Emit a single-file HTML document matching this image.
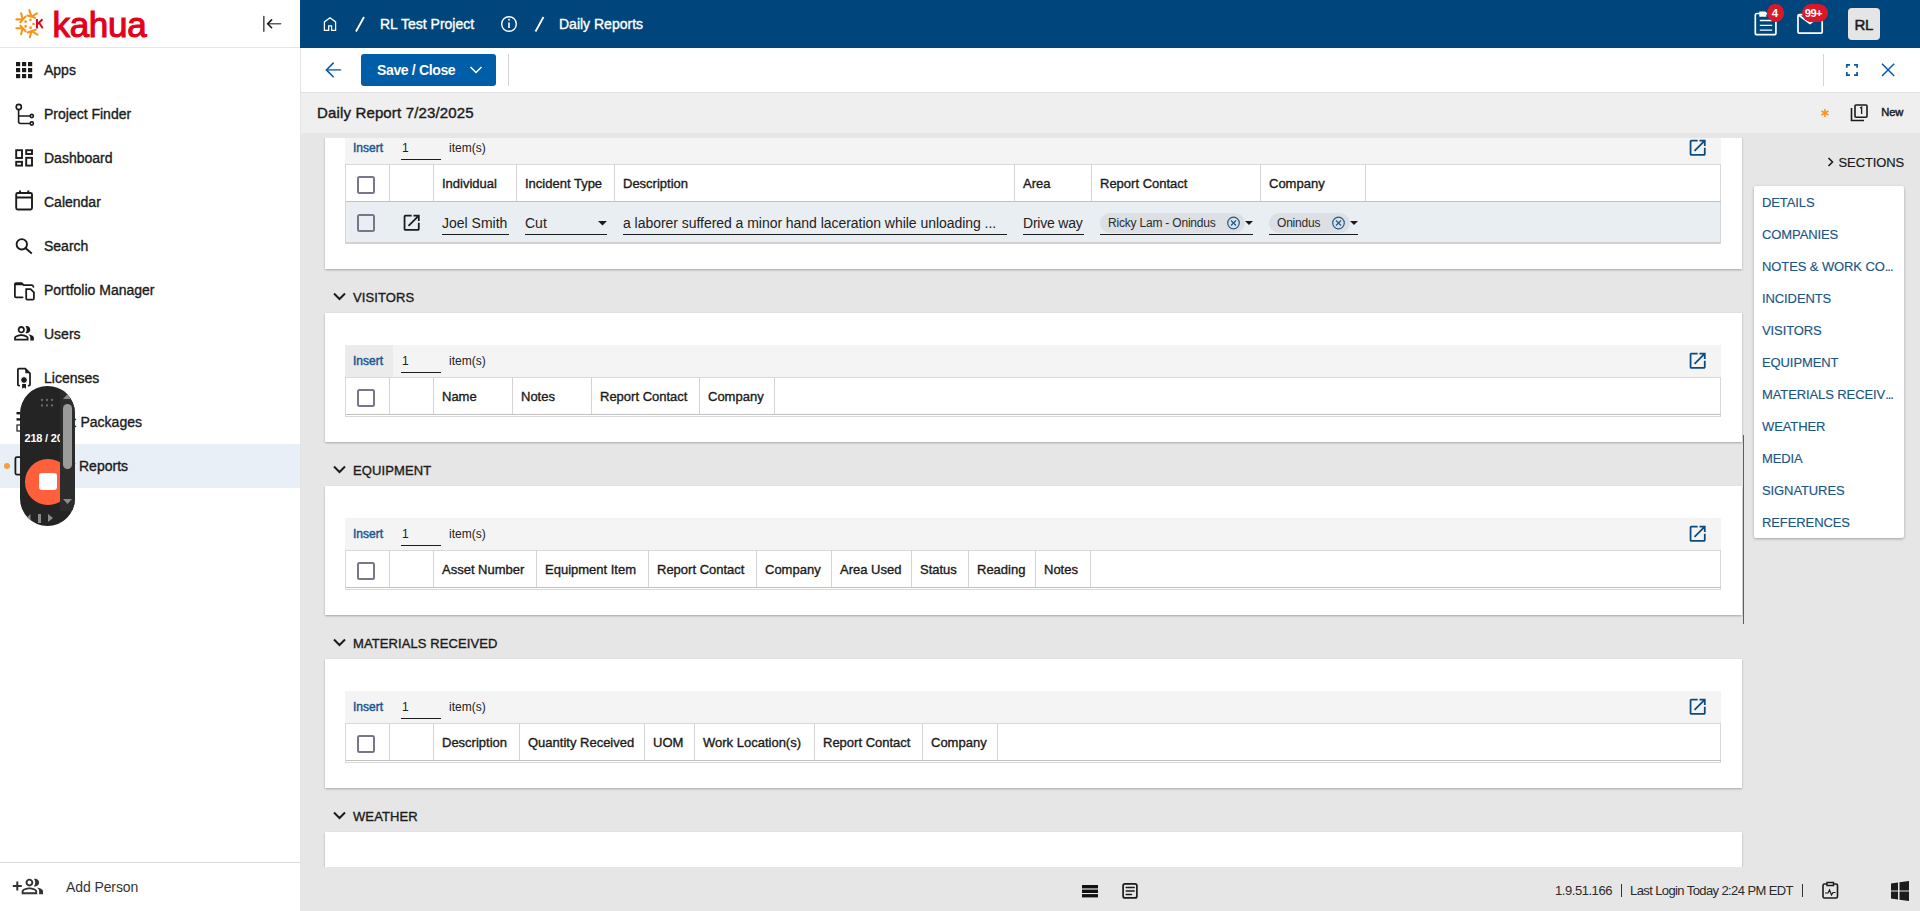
<!DOCTYPE html>
<html><head><meta charset="utf-8">
<style>
*{box-sizing:border-box;margin:0;padding:0}
html,body{width:1920px;height:911px;overflow:hidden;background:#e6e6e6;font-family:"Liberation Sans",sans-serif;color:#1b1b1b}
.a{position:absolute}
.t{white-space:nowrap;line-height:1}
.m{white-space:nowrap;line-height:1;-webkit-text-stroke:0.35px currentColor}
svg{position:absolute;overflow:visible}
</style></head><body>

<div class="a" style="left:301px;top:133px;width:1619px;height:734px;background:#e6e6e6;"></div>
<div class="a" style="left:325px;top:100px;width:1417px;height:169px;background:#fff;box-shadow:0 1px 2px rgba(0,0,0,.28)"></div>
<div class="a" style="left:345px;top:132px;width:1376px;height:32px;background:#f4f4f4;"></div>
<div class="a t" style="left:353px;top:141.8px;font-size:12px;color:#1a5891;-webkit-text-stroke:0.45px #1a5891">Insert</div>
<div class="a t" style="left:402px;top:141.8px;font-size:12px;color:#222;">1</div>
<div class="a" style="left:401px;top:158.6px;width:40px;height:1.6px;background:#1b1b1b;"></div>
<div class="a t" style="left:449px;top:141.8px;font-size:12px;color:#222;">item(s)</div>
<svg style="left:1687.3333333333333px;top:137.33333333333334px" width="21.333333333333332" height="21.333333333333332" viewBox="0 0 24 24"><path fill="#0b4b80" d="M19 19H5V5h7V3H5c-1.11 0-2 .9-2 2v14c0 1.1.89 2 2 2h14c1.1 0 2-.9 2-2v-7h-2v7zM14 3v2h3.59l-9.83 9.830 1.41 1.41L19 6.41V10h2V3h-7z"/></svg>
<div class="a" style="left:345px;top:164px;width:1376px;height:39.5px;background:#fff;border:1px solid #d9d9d9"></div>
<div class="a" style="left:346px;top:200.5px;width:1375px;height:1.6px;background:#c2c2c2;"></div>
<div class="a" style="left:357px;top:176px;width:18px;height:18px;background:transparent;border:2px solid #7b748a;border-radius:2.5px"></div>
<div class="a" style="left:389px;top:164px;width:1px;height:37px;background:#d4d4d4;"></div>
<div class="a" style="left:433px;top:164px;width:1px;height:37px;background:#d4d4d4;"></div>
<div class="a m" style="left:442px;top:176.95px;font-size:13px;color:#1b1b1b;">Individual</div>
<div class="a" style="left:516px;top:164px;width:1px;height:37px;background:#d4d4d4;"></div>
<div class="a m" style="left:525px;top:176.95px;font-size:13px;color:#1b1b1b;">Incident Type</div>
<div class="a" style="left:614px;top:164px;width:1px;height:37px;background:#d4d4d4;"></div>
<div class="a m" style="left:623px;top:176.95px;font-size:13px;color:#1b1b1b;">Description</div>
<div class="a" style="left:1014px;top:164px;width:1px;height:37px;background:#d4d4d4;"></div>
<div class="a m" style="left:1023px;top:176.95px;font-size:13px;color:#1b1b1b;">Area</div>
<div class="a" style="left:1091px;top:164px;width:1px;height:37px;background:#d4d4d4;"></div>
<div class="a m" style="left:1100px;top:176.95px;font-size:13px;color:#1b1b1b;">Report Contact</div>
<div class="a" style="left:1260px;top:164px;width:1px;height:37px;background:#d4d4d4;"></div>
<div class="a m" style="left:1269px;top:176.95px;font-size:13px;color:#1b1b1b;">Company</div>
<div class="a" style="left:1365px;top:164px;width:1px;height:37px;background:#d4d4d4;"></div>
<div class="a" style="left:345px;top:202px;width:1376px;height:42px;background:#e9eef2;border-left:1px solid #d6d6d6;border-right:1px solid #d6d6d6;border-bottom:2px solid #d2d2d2"></div>
<div class="a" style="left:357px;top:214px;width:18px;height:18px;background:transparent;border:2px solid #7b748a;border-radius:2.5px"></div>
<svg style="left:401.3333333333333px;top:212.33333333333334px" width="21.333333333333332" height="21.333333333333332" viewBox="0 0 24 24"><path fill="#1b1b1b" d="M19 19H5V5h7V3H5c-1.11 0-2 .9-2 2v14c0 1.1.89 2 2 2h14c1.1 0 2-.9 2-2v-7h-2v7zM14 3v2h3.59l-9.83 9.830 1.41 1.41L19 6.41V10h2V3h-7z"/></svg>
<div class="a t" style="left:442px;top:216.1px;font-size:14px;color:#222;">Joel Smith</div>
<div class="a" style="left:442px;top:233.8px;width:67px;height:1.6px;background:#1b1b1b;"></div>
<div class="a t" style="left:525px;top:216.1px;font-size:14px;color:#222;">Cut</div>
<svg style="left:590px;top:215px" width="25" height="20" viewBox="590 215 25 20"><path d="M598 221 h9 l-4.5 4.5z" fill="#1b1b1b"/></svg>
<div class="a" style="left:525px;top:233.8px;width:82px;height:1.6px;background:#1b1b1b;"></div>
<div class="a t" style="left:623px;top:216.1px;font-size:14px;color:#222;letter-spacing:-0.04px">a laborer suffered a minor hand laceration while unloading ...</div>
<div class="a" style="left:623px;top:233.8px;width:384px;height:1.6px;background:#1b1b1b;"></div>
<div class="a t" style="left:1023px;top:216.1px;font-size:14px;color:#222;letter-spacing:-0.2px">Drive way</div>
<div class="a" style="left:1023px;top:233.8px;width:61px;height:1.6px;background:#1b1b1b;"></div>
<div class="a" style="left:1100px;top:213px;width:145px;height:20px;background:#dcdfe3;border-radius:10px"></div>
<div class="a t" style="left:1108px;top:216.8px;font-size:12px;color:#2b2b2b;letter-spacing:-0.2px">Ricky Lam - Onindus</div>
<svg style="left:1221.5px;top:210px" width="25" height="25" viewBox="1221.5 210 25 25"><circle cx="1233.0" cy="223" r="5.8" fill="none" stroke="#1f5a8a" stroke-width="1.2"/><path d="M1230.5 220.5 l5 5 M1235.5 220.5 l-5 5" stroke="#1f5a8a" stroke-width="1.2"/></svg>
<svg style="left:1240px;top:215px" width="20" height="20" viewBox="1240 215 20 20"><path d="M1245 221 h8 l-4 4z" fill="#1b1b1b"/></svg>
<div class="a" style="left:1100px;top:233.8px;width:153px;height:1.6px;background:#1b1b1b;"></div>
<div class="a" style="left:1269px;top:213px;width:81px;height:20px;background:#dcdfe3;border-radius:10px"></div>
<div class="a t" style="left:1277px;top:216.8px;font-size:12px;color:#2b2b2b;letter-spacing:-0.2px">Onindus</div>
<svg style="left:1326.5px;top:210px" width="25" height="25" viewBox="1326.5 210 25 25"><circle cx="1338.0" cy="223" r="5.8" fill="none" stroke="#1f5a8a" stroke-width="1.2"/><path d="M1335.5 220.5 l5 5 M1340.5 220.5 l-5 5" stroke="#1f5a8a" stroke-width="1.2"/></svg>
<svg style="left:1345px;top:215px" width="20" height="20" viewBox="1345 215 20 20"><path d="M1350 221 h8 l-4 4z" fill="#1b1b1b"/></svg>
<div class="a" style="left:1269px;top:233.8px;width:89px;height:1.6px;background:#1b1b1b;"></div>
<svg style="left:325px;top:282px" width="30" height="30" viewBox="325 282 30 30"><path d="M334 293.5 l5.5 5.5 l5.5 -5.5" stroke="#1b1b1b" stroke-width="2" fill="none"/></svg>
<div class="a m" style="left:353px;top:290.95px;font-size:13px;color:#1b1b1b;letter-spacing:0.1px">VISITORS</div>
<div class="a" style="left:325px;top:313px;width:1417px;height:129px;background:#fff;box-shadow:0 1px 2px rgba(0,0,0,.28)"></div>
<div class="a" style="left:345px;top:345px;width:1376px;height:32px;background:#f4f4f4;"></div>
<div class="a" style="left:345px;top:345px;width:48px;height:32px;background:#ebebeb;"></div>
<div class="a t" style="left:353px;top:354.8px;font-size:12px;color:#1a5891;-webkit-text-stroke:0.45px #1a5891">Insert</div>
<div class="a t" style="left:402px;top:354.8px;font-size:12px;color:#222;">1</div>
<div class="a" style="left:401px;top:371.6px;width:40px;height:1.6px;background:#1b1b1b;"></div>
<div class="a t" style="left:449px;top:354.8px;font-size:12px;color:#222;">item(s)</div>
<svg style="left:1687.3333333333333px;top:350.3333333333333px" width="21.333333333333332" height="21.333333333333332" viewBox="0 0 24 24"><path fill="#0b4b80" d="M19 19H5V5h7V3H5c-1.11 0-2 .9-2 2v14c0 1.1.89 2 2 2h14c1.1 0 2-.9 2-2v-7h-2v7zM14 3v2h3.59l-9.83 9.830 1.41 1.41L19 6.41V10h2V3h-7z"/></svg>
<div class="a" style="left:345px;top:377px;width:1376px;height:39.5px;background:#fff;border:1px solid #d9d9d9"></div>
<div class="a" style="left:346px;top:413.5px;width:1375px;height:1.6px;background:#c2c2c2;"></div>
<div class="a" style="left:357px;top:389px;width:18px;height:18px;background:transparent;border:2px solid #7b748a;border-radius:2.5px"></div>
<div class="a" style="left:389px;top:377px;width:1px;height:37px;background:#d4d4d4;"></div>
<div class="a" style="left:433px;top:377px;width:1px;height:37px;background:#d4d4d4;"></div>
<div class="a m" style="left:442px;top:389.95px;font-size:13px;color:#1b1b1b;">Name</div>
<div class="a" style="left:512px;top:377px;width:1px;height:37px;background:#d4d4d4;"></div>
<div class="a m" style="left:521px;top:389.95px;font-size:13px;color:#1b1b1b;">Notes</div>
<div class="a" style="left:591px;top:377px;width:1px;height:37px;background:#d4d4d4;"></div>
<div class="a m" style="left:600px;top:389.95px;font-size:13px;color:#1b1b1b;">Report Contact</div>
<div class="a" style="left:699px;top:377px;width:1px;height:37px;background:#d4d4d4;"></div>
<div class="a m" style="left:708px;top:389.95px;font-size:13px;color:#1b1b1b;">Company</div>
<div class="a" style="left:774px;top:377px;width:1px;height:37px;background:#d4d4d4;"></div>
<svg style="left:325px;top:455px" width="30" height="30" viewBox="325 455 30 30"><path d="M334 466.5 l5.5 5.5 l5.5 -5.5" stroke="#1b1b1b" stroke-width="2" fill="none"/></svg>
<div class="a m" style="left:353px;top:463.95px;font-size:13px;color:#1b1b1b;letter-spacing:0.1px">EQUIPMENT</div>
<div class="a" style="left:325px;top:486px;width:1417px;height:129px;background:#fff;box-shadow:0 1px 2px rgba(0,0,0,.28)"></div>
<div class="a" style="left:345px;top:518px;width:1376px;height:32px;background:#f4f4f4;"></div>
<div class="a t" style="left:353px;top:527.8px;font-size:12px;color:#1a5891;-webkit-text-stroke:0.45px #1a5891">Insert</div>
<div class="a t" style="left:402px;top:527.8px;font-size:12px;color:#222;">1</div>
<div class="a" style="left:401px;top:544.6px;width:40px;height:1.6px;background:#1b1b1b;"></div>
<div class="a t" style="left:449px;top:527.8px;font-size:12px;color:#222;">item(s)</div>
<svg style="left:1687.3333333333333px;top:523.3333333333334px" width="21.333333333333332" height="21.333333333333332" viewBox="0 0 24 24"><path fill="#0b4b80" d="M19 19H5V5h7V3H5c-1.11 0-2 .9-2 2v14c0 1.1.89 2 2 2h14c1.1 0 2-.9 2-2v-7h-2v7zM14 3v2h3.59l-9.83 9.830 1.41 1.41L19 6.41V10h2V3h-7z"/></svg>
<div class="a" style="left:345px;top:550px;width:1376px;height:39.5px;background:#fff;border:1px solid #d9d9d9"></div>
<div class="a" style="left:346px;top:586.5px;width:1375px;height:1.6px;background:#c2c2c2;"></div>
<div class="a" style="left:357px;top:562px;width:18px;height:18px;background:transparent;border:2px solid #7b748a;border-radius:2.5px"></div>
<div class="a" style="left:389px;top:550px;width:1px;height:37px;background:#d4d4d4;"></div>
<div class="a" style="left:433px;top:550px;width:1px;height:37px;background:#d4d4d4;"></div>
<div class="a m" style="left:442px;top:562.95px;font-size:13px;color:#1b1b1b;">Asset Number</div>
<div class="a" style="left:536px;top:550px;width:1px;height:37px;background:#d4d4d4;"></div>
<div class="a m" style="left:545px;top:562.95px;font-size:13px;color:#1b1b1b;">Equipment Item</div>
<div class="a" style="left:648px;top:550px;width:1px;height:37px;background:#d4d4d4;"></div>
<div class="a m" style="left:657px;top:562.95px;font-size:13px;color:#1b1b1b;">Report Contact</div>
<div class="a" style="left:756px;top:550px;width:1px;height:37px;background:#d4d4d4;"></div>
<div class="a m" style="left:765px;top:562.95px;font-size:13px;color:#1b1b1b;">Company</div>
<div class="a" style="left:831px;top:550px;width:1px;height:37px;background:#d4d4d4;"></div>
<div class="a m" style="left:840px;top:562.95px;font-size:13px;color:#1b1b1b;">Area Used</div>
<div class="a" style="left:911px;top:550px;width:1px;height:37px;background:#d4d4d4;"></div>
<div class="a m" style="left:920px;top:562.95px;font-size:13px;color:#1b1b1b;">Status</div>
<div class="a" style="left:968px;top:550px;width:1px;height:37px;background:#d4d4d4;"></div>
<div class="a m" style="left:977px;top:562.95px;font-size:13px;color:#1b1b1b;">Reading</div>
<div class="a" style="left:1035px;top:550px;width:1px;height:37px;background:#d4d4d4;"></div>
<div class="a m" style="left:1044px;top:562.95px;font-size:13px;color:#1b1b1b;">Notes</div>
<div class="a" style="left:1090px;top:550px;width:1px;height:37px;background:#d4d4d4;"></div>
<svg style="left:325px;top:628px" width="30" height="30" viewBox="325 628 30 30"><path d="M334 639.5 l5.5 5.5 l5.5 -5.5" stroke="#1b1b1b" stroke-width="2" fill="none"/></svg>
<div class="a m" style="left:353px;top:636.95px;font-size:13px;color:#1b1b1b;letter-spacing:0.1px">MATERIALS RECEIVED</div>
<div class="a" style="left:325px;top:659px;width:1417px;height:129px;background:#fff;box-shadow:0 1px 2px rgba(0,0,0,.28)"></div>
<div class="a" style="left:345px;top:691px;width:1376px;height:32px;background:#f4f4f4;"></div>
<div class="a t" style="left:353px;top:700.8px;font-size:12px;color:#1a5891;-webkit-text-stroke:0.45px #1a5891">Insert</div>
<div class="a t" style="left:402px;top:700.8px;font-size:12px;color:#222;">1</div>
<div class="a" style="left:401px;top:717.6px;width:40px;height:1.6px;background:#1b1b1b;"></div>
<div class="a t" style="left:449px;top:700.8px;font-size:12px;color:#222;">item(s)</div>
<svg style="left:1687.3333333333333px;top:696.3333333333334px" width="21.333333333333332" height="21.333333333333332" viewBox="0 0 24 24"><path fill="#0b4b80" d="M19 19H5V5h7V3H5c-1.11 0-2 .9-2 2v14c0 1.1.89 2 2 2h14c1.1 0 2-.9 2-2v-7h-2v7zM14 3v2h3.59l-9.83 9.830 1.41 1.41L19 6.41V10h2V3h-7z"/></svg>
<div class="a" style="left:345px;top:723px;width:1376px;height:39.5px;background:#fff;border:1px solid #d9d9d9"></div>
<div class="a" style="left:346px;top:759.5px;width:1375px;height:1.6px;background:#c2c2c2;"></div>
<div class="a" style="left:357px;top:735px;width:18px;height:18px;background:transparent;border:2px solid #7b748a;border-radius:2.5px"></div>
<div class="a" style="left:389px;top:723px;width:1px;height:37px;background:#d4d4d4;"></div>
<div class="a" style="left:433px;top:723px;width:1px;height:37px;background:#d4d4d4;"></div>
<div class="a m" style="left:442px;top:735.95px;font-size:13px;color:#1b1b1b;">Description</div>
<div class="a" style="left:519px;top:723px;width:1px;height:37px;background:#d4d4d4;"></div>
<div class="a m" style="left:528px;top:735.95px;font-size:13px;color:#1b1b1b;">Quantity Received</div>
<div class="a" style="left:644px;top:723px;width:1px;height:37px;background:#d4d4d4;"></div>
<div class="a m" style="left:653px;top:735.95px;font-size:13px;color:#1b1b1b;">UOM</div>
<div class="a" style="left:694px;top:723px;width:1px;height:37px;background:#d4d4d4;"></div>
<div class="a m" style="left:703px;top:735.95px;font-size:13px;color:#1b1b1b;">Work Location(s)</div>
<div class="a" style="left:814px;top:723px;width:1px;height:37px;background:#d4d4d4;"></div>
<div class="a m" style="left:823px;top:735.95px;font-size:13px;color:#1b1b1b;">Report Contact</div>
<div class="a" style="left:922px;top:723px;width:1px;height:37px;background:#d4d4d4;"></div>
<div class="a m" style="left:931px;top:735.95px;font-size:13px;color:#1b1b1b;">Company</div>
<div class="a" style="left:997px;top:723px;width:1px;height:37px;background:#d4d4d4;"></div>
<svg style="left:325px;top:801px" width="30" height="30" viewBox="325 801 30 30"><path d="M334 812.5 l5.5 5.5 l5.5 -5.5" stroke="#1b1b1b" stroke-width="2" fill="none"/></svg>
<div class="a m" style="left:353px;top:809.95px;font-size:13px;color:#1b1b1b;letter-spacing:0.1px">WEATHER</div>
<div class="a" style="left:325px;top:832px;width:1417px;height:60px;background:#fff;box-shadow:0 1px 2px rgba(0,0,0,.28)"></div>
<div class="a" style="left:301px;top:133px;width:1619px;height:5px;background:#e6e6e6;"></div>
<div class="a" style="left:1742.5px;top:435px;width:1.5px;height:189px;background:#5e5e5e;"></div>
<svg style="left:1820px;top:150px" width="20" height="25" viewBox="1820 150 20 25"><path d="M1828.5 158 l4 4 l-4 4" stroke="#1b1b1b" stroke-width="1.6" fill="none"/></svg>
<div class="a t" style="left:1838.5px;top:155.95px;font-size:13px;color:#1b1b1b;letter-spacing:-0.1px;-webkit-text-stroke:0.2px #1b1b1b">SECTIONS</div>
<div class="a" style="left:1754px;top:186px;width:150px;height:352px;background:#fff;border-radius:2px;box-shadow:0 1px 3px rgba(0,0,0,.3)"></div>
<div class="a t" style="left:1762px;top:195.95px;font-size:13px;color:#1b5586;letter-spacing:-0.1px;-webkit-text-stroke:0.15px #1b5586">DETAILS</div>
<div class="a t" style="left:1762px;top:227.95px;font-size:13px;color:#1b5586;letter-spacing:-0.1px;-webkit-text-stroke:0.15px #1b5586">COMPANIES</div>
<div class="a t" style="left:1762px;top:259.95px;font-size:13px;color:#1b5586;letter-spacing:-0.1px;-webkit-text-stroke:0.15px #1b5586">NOTES &amp; WORK CO<span style='letter-spacing:-1px'>...</span></div>
<div class="a t" style="left:1762px;top:291.95px;font-size:13px;color:#1b5586;letter-spacing:-0.1px;-webkit-text-stroke:0.15px #1b5586">INCIDENTS</div>
<div class="a t" style="left:1762px;top:323.95px;font-size:13px;color:#1b5586;letter-spacing:-0.1px;-webkit-text-stroke:0.15px #1b5586">VISITORS</div>
<div class="a t" style="left:1762px;top:355.95px;font-size:13px;color:#1b5586;letter-spacing:-0.1px;-webkit-text-stroke:0.15px #1b5586">EQUIPMENT</div>
<div class="a t" style="left:1762px;top:387.95px;font-size:13px;color:#1b5586;letter-spacing:-0.1px;-webkit-text-stroke:0.15px #1b5586">MATERIALS RECEIV<span style='letter-spacing:-1px'>...</span></div>
<div class="a t" style="left:1762px;top:419.95px;font-size:13px;color:#1b5586;letter-spacing:-0.1px;-webkit-text-stroke:0.15px #1b5586">WEATHER</div>
<div class="a t" style="left:1762px;top:451.95px;font-size:13px;color:#1b5586;letter-spacing:-0.1px;-webkit-text-stroke:0.15px #1b5586">MEDIA</div>
<div class="a t" style="left:1762px;top:483.95px;font-size:13px;color:#1b5586;letter-spacing:-0.1px;-webkit-text-stroke:0.15px #1b5586">SIGNATURES</div>
<div class="a t" style="left:1762px;top:515.95px;font-size:13px;color:#1b5586;letter-spacing:-0.1px;-webkit-text-stroke:0.15px #1b5586">REFERENCES</div>
<div class="a" style="left:301px;top:867px;width:1619px;height:44px;background:#e6e6e6;"></div>
<svg style="left:1075px;top:878px" width="30" height="25" viewBox="1075 878 30 25"><rect x="1082" y="885" width="16" height="8" fill="#111"/><rect x="1082" y="888" width="16" height="2" fill="#8c8f90"/><rect x="1082" y="894.1" width="16" height="3.3" fill="#111"/></svg>
<svg style="left:1115px;top:878px" width="30" height="25" viewBox="1115 878 30 25"><rect x="1123.1" y="883.8" width="13.8" height="14.1" rx="2" fill="none" stroke="#1b1b1b" stroke-width="1.7"/><path d="M1126.2 887.4 h8 M1126.2 891 h8 M1126.2 894.5 h5.3" stroke="#1b1b1b" stroke-width="1.5" stroke-linecap="round"/></svg>
<div class="a t" style="left:1555px;top:883.95px;font-size:13px;color:#2a2a2a;letter-spacing:-0.45px">1.9.51.166</div>
<div class="a" style="left:1621px;top:884px;width:1px;height:13px;background:#333;"></div>
<div class="a t" style="left:1630px;top:883.95px;font-size:13px;color:#2a2a2a;letter-spacing:-0.6px">Last Login Today 2:24 PM EDT</div>
<div class="a" style="left:1802px;top:884px;width:1px;height:13px;background:#333;"></div>
<svg style="left:1815px;top:876px" width="30" height="28" viewBox="1815 876 30 28"><rect x="1823" y="884" width="14.5" height="14" rx="1.5" fill="none" stroke="#1b1b1b" stroke-width="1.6"/><path d="M1827 882.5 h6.5 v3 h-6.5z" fill="#e6e6e6" stroke="#1b1b1b" stroke-width="1.4"/><path d="M1825 893 h3 l1.5 -3 l2 5 l1.5 -2.5 h2.5" stroke="#1b1b1b" stroke-width="1.2" fill="none"/></svg>
<svg style="left:1885px;top:876px" width="30" height="30" viewBox="1885 876 30 30"><path d="M1891 883.5 l7 -1 v8 h-7z M1899.5 882.3 l9.5 -1.4 v9.6 h-9.5z M1891 891.5 h7 v8 l-7 -1z M1899.5 891.5 h9.5 v9.6 l-9.5 -1.4z" fill="#1b1b1b"/></svg>
<div class="a" style="left:0px;top:0px;width:300px;height:911px;background:#fff;"></div>
<div class="a" style="left:300px;top:48px;width:1px;height:819px;background:#e4e4e4;"></div>
<div class="a" style="left:0px;top:47px;width:300px;height:1px;background:#e6e6e6;"></div>
<div class="a t" style="left:52.5px;top:7.25px;font-size:35px;color:#e2001a;letter-spacing:-0.3px;-webkit-text-stroke:1.1px #e2001a">kahua</div>
<svg style="left:0px;top:0px" width="60" height="48" viewBox="0 0 60 48"><g stroke="#f7941d" stroke-width="2.1" fill="none" stroke-linecap="round"><path d="M27.5 15.5 L35 17.8 M31.5 16.6 L29.3 10.2 M31.5 16.6 L37 13.3"/><path d="M20.4 22.4 L25.5 16.6 M22.7 19.5 L21.1 13.3 M22.7 19.5 L16.4 19.4"/><path d="M20.4 25.6 L25.6 31.2 M22.7 28.4 L16.4 28.2 M22.7 28.4 L21.1 34.3"/><path d="M27.6 32.4 L35.7 29.7 M31.6 31.1 L29.8 37.3 M31.6 31.1 L37.5 34.6"/></g><circle cx="25.6" cy="21.6" r="1.35" fill="#f7941d"/><circle cx="30.4" cy="19.8" r="1.35" fill="#f7941d"/><circle cx="33.5" cy="24" r="1.35" fill="#f7941d"/><circle cx="30.6" cy="27.7" r="1.35" fill="#f7941d"/><circle cx="25.6" cy="26.4" r="1.35" fill="#f7941d"/><path d="M37 19 V28.5 M37.3 24.2 L42.5 19.3 M39.2 22.7 L42.7 28.3" stroke="#e2001a" stroke-width="1.9" fill="none"/></svg>
<svg style="left:255px;top:8px" width="35" height="30" viewBox="255 8 35 30"><path d="M263.8 16.5 v14.8" stroke="#555" stroke-width="1.6" stroke-linecap="round"/><path d="M268 23.8 h12.6" stroke="#5b5f60" stroke-width="1.5" stroke-linecap="round"/><path d="M271.6 19.9 l-3.9 3.9 l3.9 3.9" stroke="#1b1b1b" stroke-width="1.6" fill="none" stroke-linecap="round"/></svg>
<div class="a" style="left:0px;top:444px;width:300px;height:44px;background:#e9eff6;"></div>
<div class="a" style="left:4.2px;top:463px;width:5.8px;height:5.8px;background:#f4a040;border-radius:50%"></div>
<div class="a m" style="left:44px;top:63.1px;font-size:14px;color:#1b1b1b;">Apps</div>
<div class="a m" style="left:44px;top:107.1px;font-size:14px;color:#1b1b1b;">Project Finder</div>
<div class="a m" style="left:44px;top:151.1px;font-size:14px;color:#1b1b1b;">Dashboard</div>
<div class="a m" style="left:44px;top:195.1px;font-size:14px;color:#1b1b1b;">Calendar</div>
<div class="a m" style="left:44px;top:239.1px;font-size:14px;color:#1b1b1b;">Search</div>
<div class="a m" style="left:44px;top:283.1px;font-size:14px;color:#1b1b1b;">Portfolio Manager</div>
<div class="a m" style="left:44px;top:327.1px;font-size:14px;color:#1b1b1b;">Users</div>
<div class="a m" style="left:44px;top:371.1px;font-size:14px;color:#1b1b1b;">Licenses</div>
<div class="a m" style="left:44px;top:459.1px;font-size:14px;color:#1b1b1b;">Daily Reports</div>
<div class="a m" style="left:44px;top:415.1px;font-size:14px;color:#1b1b1b;letter-spacing:1px">Cost</div>
<div class="a m" style="left:80.5px;top:415.1px;font-size:14px;color:#1b1b1b;">Packages</div>
<svg style="left:0px;top:50px" width="60" height="400" viewBox="0 50 60 400"><g fill="#1b1b1b"><rect x="16" y="62" width="4.2" height="4.2"/><rect x="16" y="68" width="4.2" height="4.2"/><rect x="16" y="74" width="4.2" height="4.2"/><rect x="22" y="62" width="4.2" height="4.2"/><rect x="22" y="68" width="4.2" height="4.2"/><rect x="22" y="74" width="4.2" height="4.2"/><rect x="28" y="62" width="4.2" height="4.2"/><rect x="28" y="68" width="4.2" height="4.2"/><rect x="28" y="74" width="4.2" height="4.2"/></g><g stroke="#1b1b1b" stroke-width="1.6" fill="none"><circle cx="18.8" cy="107" r="2.6"/><path d="M18.6 109.6 V121.5 q0 2 2 2 H30 M18.6 116 H30"/><circle cx="31.8" cy="116" r="1.6"/><circle cx="31.8" cy="123.5" r="1.6"/></g><g stroke="#1b1b1b" stroke-width="1.9" fill="none"><rect x="16.2" y="150.2" width="5.8" height="7.8"/><rect x="16.2" y="161.8" width="5.8" height="3.8"/><rect x="26.2" y="150.2" width="5.8" height="3.8"/><rect x="26.2" y="157.8" width="5.8" height="7.8"/></g><g stroke="#1b1b1b" stroke-width="1.9" fill="none"><rect x="16.2" y="193" width="15.8" height="16.5" rx="1.5"/><path d="M16.2 197.5 H32 M20 190.5 v3 M28.3 190.5 v3"/></g><g stroke="#1b1b1b" stroke-width="1.9" fill="none"><circle cx="21.8" cy="244.3" r="5.2"/><path d="M25.6 248.3 L31.8 253.5"/></g><g stroke="#1b1b1b" stroke-width="1.75" fill="none" stroke-linecap="round"><path d="M22.6 297.3 H16 q-1.1 0 -1.1 -1.1 V284 q0 -1 1 -1 H21.7 l2 2 H32 q1.1 0 1.4 1.8"/><path d="M26.2 289.1 H30.6 l3.3 3.3 V298.5 q0 1.2 -1.2 1.2 H27.4 q-1.2 0 -1.2 -1.2z"/></g><path d="M15 283.2 H21.7 l2 2 H15z" fill="#1b1b1b"/><path transform="translate(13.2 322.5) scale(0.9)" fill="#1b1b1b" d="M16.67 13.13C18.04 14.06 19 15.32 19 17v3h4v-3c0-2.18-3.57-3.47-6.33-3.87zM15 12c2.21 0 4-1.79 4-4s-1.79-4-4-4c-.47 0-.91.1-1.33.24C14.5 5.27 15 6.58 15 8s-.5 2.73-1.330 3.76c.42.14.86.24 1.33.24zM9 12c2.21 0 4-1.79 4-4s-1.79-4-4-4-4 1.79-4 4 1.79 4 4 4zm0-6c1.1 0 2 .9 2 2s-.9 2-2 2-2-.9-2-2 .9-2 2-2zM9 13c-2.67 0-8 1.34-8 4v3h16v-3c0-2.66-5.33-4-8-4zm6 5H3v-.99C3.2 16.29 6.3 15 9 15s5.8 1.29 6 2v1z"/><g stroke="#1b1b1b" stroke-width="1.75" fill="none" stroke-linecap="round"><path d="M19.3 385.5 H18.9 q-1 0 -1 -1 V369.6 q0 -1 1 -1 H25.3 L30 373.3 V384.5 q0 1 -1 1 H28.6"/></g><path d="M25.3 368.6 V373.3 H30z" fill="#1b1b1b"/><g fill="#1b1b1b"><path d="M24 376.6 l0.9 1.2 l1.5 -0.2 l-0.2 1.5 l1.2 0.9 l-1.2 0.9 l0.2 1.5 l-1.5 -0.2 l-0.9 1.2 l-0.9 -1.2 l-1.5 0.2 l0.2 -1.5 l-1.2 -0.9 l1.2 -0.9 l-0.2 -1.5 l1.5 0.2z"/><path d="M22.1 384 H26 V388.8 L24.05 387.5 L22.1 388.8z"/></g><g fill="#1b1b1b"><rect x="16.5" y="412" width="4" height="2.4"/><rect x="16.5" y="418.2" width="4" height="2.4"/></g><rect x="17" y="425" width="4" height="6" stroke="#1b1b1b" stroke-width="1.2" fill="none"/><g stroke="#1b1b1b" stroke-width="1.8" fill="none"><rect x="15.4" y="457.1" width="10" height="17.5" rx="1.5"/></g></svg>
<div class="a" style="left:0px;top:862px;width:300px;height:1px;background:#d9d9d9;"></div>
<div class="a t" style="left:66px;top:880.1px;font-size:14px;color:#333;letter-spacing:-0.1px">Add Person</div>
<svg style="left:0px;top:870px" width="50" height="35" viewBox="0 870 50 35"><path d="M12.8 886 h9 M17.3 881.5 v9" stroke="#333" stroke-width="2"/><path transform="translate(20.7 874.8) scale(0.97)" fill="#333" d="M16.67 13.13C18.04 14.06 19 15.32 19 17v3h4v-3c0-2.18-3.57-3.47-6.33-3.87zM15 12c2.21 0 4-1.79 4-4s-1.79-4-4-4c-.47 0-.91.1-1.33.24C14.5 5.27 15 6.58 15 8s-.5 2.73-1.330 3.76c.42.14.86.24 1.33.24zM9 12c2.21 0 4-1.79 4-4s-1.79-4-4-4-4 1.79-4 4 1.79 4 4 4zm0-6c1.1 0 2 .9 2 2s-.9 2-2 2-2-.9-2-2 .9-2 2-2zM9 13c-2.67 0-8 1.34-8 4v3h16v-3c0-2.66-5.33-4-8-4zm6 5H3v-.99C3.2 16.29 6.3 15 9 15s5.8 1.29 6 2v1z"/></svg>
<div class="a" style="left:20px;top:386px;width:55px;height:140px;border-radius:27.5px;overflow:hidden;background:#242424"><div class="a" style="left:40px;top:0;width:15px;height:125px;background:#2c2c2c"></div><div class="a" style="left:43px;top:18px;width:9px;height:65px;border-radius:4.5px;background:#9b9b9b"></div><svg style="left:0;top:0" width="55" height="140"><path d="M43 13 l4.5 -5 l4.5 5z M43 113 l4.5 5 l4.5 -5z" fill="#8a8a8a"/><circle cx="22" cy="14.0" r="1.15" fill="#6e6a78"/><circle cx="22" cy="19.5" r="1.15" fill="#6e6a78"/><circle cx="27" cy="14.0" r="1.15" fill="#6e6a78"/><circle cx="27" cy="19.5" r="1.15" fill="#6e6a78"/><circle cx="32" cy="14.0" r="1.15" fill="#6e6a78"/><circle cx="32" cy="19.5" r="1.15" fill="#6e6a78"/><path d="M10.5 128 l-4 4 l4 4z M18 128 h3 v9 h-3z M28 128 l5 4 l-5 4z" fill="#8a8a8a"/></svg><div class="a" style="left:0;top:0;width:40px;height:122px;overflow:hidden"><div class="a t" style="left:4.5px;top:47.2px;font-size:11px;font-weight:bold;color:#fff;letter-spacing:-0.2px">218 / 20</div><div class="a" style="left:5px;top:73px;width:45.5px;height:45.5px;border-radius:50%;background:#ff5f3b"></div></div><div class="a" style="left:19px;top:86.5px;width:17.5px;height:17.5px;border-radius:3px;background:#fff"></div></div>
<div class="a" style="left:300px;top:0px;width:1620px;height:48px;background:#00467c;"></div>
<svg style="left:315px;top:10px" width="30" height="28" viewBox="315 10 30 28"><path d="M324.4 30.3 V21.9 L330 17.7 L335.6 21.9 V30.3 H331.6 V25.9 H328.7 V30.3 Z" stroke="#fff" stroke-width="1.25" fill="none" stroke-linejoin="miter"/></svg>
<svg style="left:340px;top:10px" width="220" height="28" viewBox="340 10 220 28"><path d="M356 31.5 L364 17" stroke="#fff" stroke-width="1.8"/><path d="M535.5 31.5 L543.5 17" stroke="#fff" stroke-width="1.8"/></svg>
<div class="a m" style="left:380px;top:17.1px;font-size:14px;color:#fff;">RL Test Project</div>
<svg style="left:495px;top:10px" width="30" height="30" viewBox="495 10 30 30"><circle cx="509" cy="24" r="7.3" stroke="#fff" stroke-width="1.4" fill="none"/><path d="M509 22.5 v5.5" stroke="#fff" stroke-width="1.6"/><circle cx="509" cy="19.8" r="0.95" fill="#fff"/></svg>
<div class="a m" style="left:559px;top:17.1px;font-size:14px;color:#fff;">Daily Reports</div>
<svg style="left:1745px;top:5px" width="40" height="40" viewBox="1745 5 40 40"><rect x="1755.3" y="13.5" width="20.6" height="21.2" rx="1.8" stroke="#fff" stroke-width="1.7" fill="none"/><path d="M1759.8 20.5 h12.4 M1759.8 25.4 h12.4 M1759.8 30.1 h12.4" stroke="#fff" stroke-width="1.3"/><path d="M1759.3 16.8 V11.5 h5.5 q1.5 0 1.5 1.5 V16.8z" fill="#fff"/></svg>
<div class="a" style="left:1766.5px;top:4px;width:17.5px;height:17.5px;border-radius:50%;background:#d7192a"></div>
<div class="a t" style="left:1771.8px;top:8.42px;font-size:11.5px;color:#fff;font-weight:bold">4</div>
<svg style="left:1790px;top:5px" width="40" height="40" viewBox="1790 5 40 40"><rect x="1798" y="14.6" width="24.2" height="18.6" rx="1.2" stroke="#fff" stroke-width="1.7" fill="none"/><path d="M1798.5 15 L1810 23.5 L1821.5 15" stroke="#fff" stroke-width="1.7" fill="none"/></svg>
<div class="a" style="left:1802px;top:4px;width:26px;height:18px;border-radius:9px;background:#d7192a"></div>
<div class="a t" style="left:1804.8px;top:8.28px;font-size:11.2px;color:#fff;font-weight:bold;letter-spacing:-0.6px">99+</div>
<div class="a" style="left:1848px;top:8px;width:32px;height:32px;background:#e5e5e5;border-radius:4px"></div>
<div class="a t" style="left:1854.5px;top:17.25px;font-size:15px;color:#1b1b1b;letter-spacing:-0.3px;-webkit-text-stroke:0.5px #1b1b1b">RL</div>
<div class="a" style="left:301px;top:48px;width:1619px;height:44px;background:#fff;"></div>
<div class="a" style="left:301px;top:92px;width:1619px;height:1px;background:#e2e2e2;"></div>
<svg style="left:318px;top:55px" width="30" height="30" viewBox="318 55 30 30"><path d="M327 69.9 H340.5" stroke="#3d86c0" stroke-width="1.6" stroke-linecap="round"/><path d="M333.2 63.1 L326.4 69.9 L333.2 76.7" stroke="#0f5aa5" stroke-width="1.6" fill="none" stroke-linecap="round"/></svg>
<div class="a" style="left:361px;top:54px;width:135px;height:32px;background:#005ea8;border-radius:3px"></div>
<div class="a t" style="left:377px;top:63.1px;font-size:14px;color:#fff;font-weight:bold;letter-spacing:-0.35px">Save / Close</div>
<svg style="left:465px;top:60px" width="25" height="20" viewBox="465 60 25 20"><path d="M470.5 67 L476 72.5 L481.5 67" stroke="#fff" stroke-width="1.5" fill="none"/></svg>
<div class="a" style="left:508px;top:54px;width:1px;height:32px;background:#d6d6d6;"></div>
<div class="a" style="left:1823px;top:54px;width:1px;height:32px;background:#d6d6d6;"></div>
<svg style="left:1840px;top:58px" width="25" height="25" viewBox="1840 58 25 25"><path d="M1846.8 67.8 V64.8 H1850 M1854 64.8 H1857.1 V67.8 M1857.1 72 V75.1 H1854 M1850 75.1 H1846.8 V72" stroke="#0a5aa8" stroke-width="1.75" fill="none"/></svg>
<svg style="left:1875px;top:57px" width="25" height="25" viewBox="1875 57 25 25"><path d="M1882 63.8 L1894.2 76 M1894.2 63.8 L1882 76" stroke="#0a5aa8" stroke-width="1.5"/></svg>
<div class="a" style="left:301px;top:93px;width:1619px;height:40px;background:#efefef;"></div>
<div class="a t" style="left:317px;top:105.25px;font-size:15px;color:#1b1b1b;letter-spacing:0.15px;-webkit-text-stroke:0.4px #1b1b1b">Daily Report 7/23/2025</div>
<svg style="left:1815px;top:100px" width="20" height="25" viewBox="1815 100 20 25"><path d="M1824.9 109 v8 M1821.4 111 l7 4 M1828.4 111 l-7 4" stroke="#f7941d" stroke-width="1.5"/></svg>
<svg style="left:1845px;top:100px" width="30" height="25" viewBox="1845 100 30 25"><path d="M1851.5 108 V120.5 H1864" stroke="#1b1b1b" stroke-width="1.6" fill="none"/><rect x="1855" y="105" width="12" height="12.3" rx="1" stroke="#1b1b1b" stroke-width="1.6" fill="none"/><path d="M1860 108 l1.6 -0.9 v7" stroke="#1b1b1b" stroke-width="1.3" fill="none"/></svg>
<div class="a t" style="left:1881.2px;top:107.48px;font-size:11.2px;color:#1b1b1b;letter-spacing:-0.1px;-webkit-text-stroke:0.45px #1b1b1b">New</div>
</body></html>
